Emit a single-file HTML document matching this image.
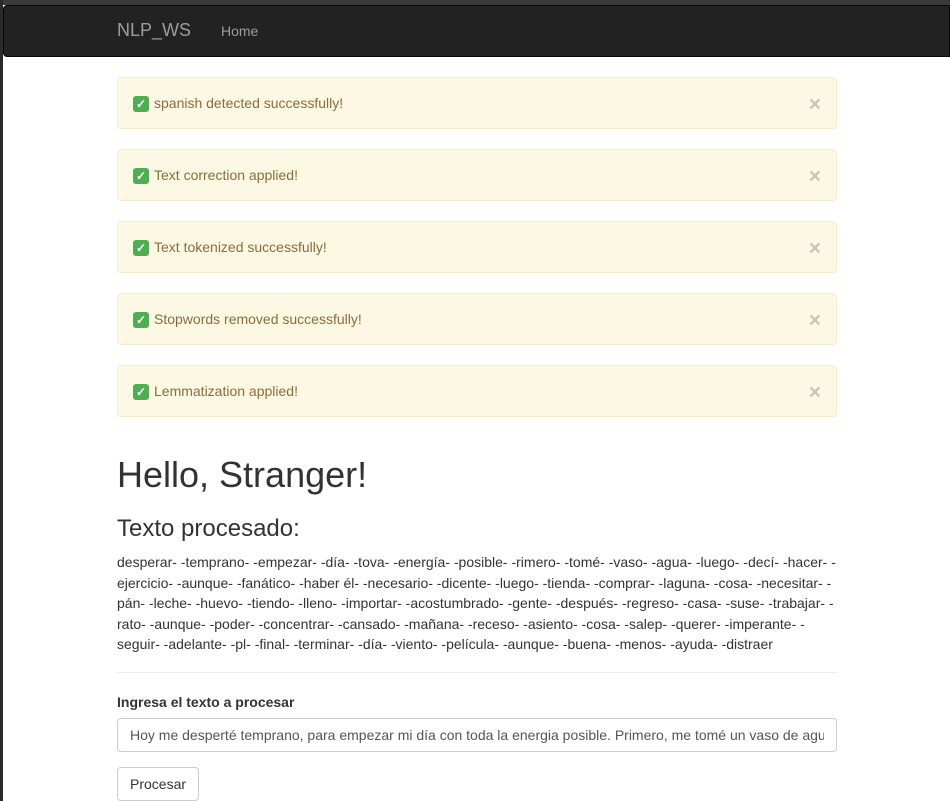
<!DOCTYPE html>
<html><head><meta charset="utf-8"><style>
*{box-sizing:border-box}
body{margin:0;width:950px;height:801px;overflow:hidden;background:#fff;font-family:"Liberation Sans",Helvetica,Arial,sans-serif;font-size:14px;line-height:1.42857;color:#333;position:relative}
.topbar{position:absolute;left:0;top:0;width:950px;height:5px;background:#3a3a3a}
.leftbar{position:absolute;left:0;top:0;width:3px;height:801px;background:#2a2a2a}
.nav{position:absolute;left:3px;top:5px;width:947px;height:52px;background:#222;border:1px solid #080808;border-radius:4px 0 0 4px}
.brand{position:absolute;left:113px;top:14px;font-size:18px;color:#9d9d9d;line-height:20px}
.home{position:absolute;left:217px;top:15px;color:#9d9d9d;font-size:14px;line-height:20px}
.alert{position:absolute;left:117px;width:720px;height:52px;background:#fcf8e3;border:1px solid #faebcc;border-radius:4px;color:#8a6d3b;padding:15px 15px;line-height:20px}
.alert .x{position:absolute;right:15px;top:17px;font-size:21px;font-weight:bold;color:#000;opacity:.2;line-height:20px}
.ck{display:inline-block;width:16px;height:16px;background:#4caf50;border-radius:3px;color:#fff;font-size:12px;text-align:center;line-height:16px;vertical-align:0px;margin-right:5px;font-weight:bold}
h1{position:absolute;left:117px;top:455px;margin:0;font-size:36px;font-weight:500;line-height:40px}
h3{position:absolute;left:117px;top:515px;margin:0;font-size:24px;font-weight:500;line-height:28px}
p{position:absolute;left:117px;top:552px;margin:0;width:730px;line-height:20.5px;white-space:nowrap}
hr{position:absolute;left:117px;top:672px;width:720px;margin:0;border:0;border-top:1px solid #eee}
label{position:absolute;left:117px;top:693px;font-weight:bold}
.inp{position:absolute;left:117px;top:718px;width:720px;height:34px;border:1px solid #ccc;border-radius:4px;padding:6px 12px;color:#555;line-height:20px}
.inp span{display:block;width:694px;overflow:hidden;white-space:nowrap}
.btn{position:absolute;left:117px;top:767px;width:82px;height:34px;border:1px solid #ccc;border-radius:4px;padding:6px 12px;line-height:20px;color:#333}
</style></head><body>
<div class="topbar"></div><div class="leftbar"></div>
<div class="nav"><span class="brand">NLP_WS</span><span class="home">Home</span></div>
<div class="alert" style="top:77px"><span class="ck">✓</span>spanish detected successfully!<span class="x">×</span></div>
<div class="alert" style="top:149px"><span class="ck">✓</span>Text correction applied!<span class="x">×</span></div>
<div class="alert" style="top:221px"><span class="ck">✓</span>Text tokenized successfully!<span class="x">×</span></div>
<div class="alert" style="top:293px"><span class="ck">✓</span>Stopwords removed successfully!<span class="x">×</span></div>
<div class="alert" style="top:365px"><span class="ck">✓</span>Lemmatization applied!<span class="x">×</span></div>
<h1>Hello, Stranger!</h1>
<h3>Texto procesado:</h3>
<p>desperar- -temprano- -empezar- -día- -tova- -energía- -posible- -rimero- -tomé- -vaso- -agua- -luego- -decí- -hacer- -<br>ejercicio- -aunque- -fanático- -haber él- -necesario- -dicente- -luego- -tienda- -comprar- -laguna- -cosa- -necesitar- -<br>pán- -leche- -huevo- -tiendo- -lleno- -importar- -acostumbrado- -gente- -después- -regreso- -casa- -suse- -trabajar- -<br>rato- -aunque- -poder- -concentrar- -cansado- -mañana- -receso- -asiento- -cosa- -salep- -querer- -imperante- -<br>seguir- -adelante- -pl- -final- -terminar- -día- -viento- -película- -aunque- -buena- -menos- -ayuda- -distraer</p>
<hr>
<label>Ingresa el texto a procesar</label>
<div class="inp"><span>Hoy me desperté temprano, para empezar mi día con toda la energia posible. Primero, me tomé un vaso de agua</span></div>
<div class="btn">Procesar</div>
</body></html>
